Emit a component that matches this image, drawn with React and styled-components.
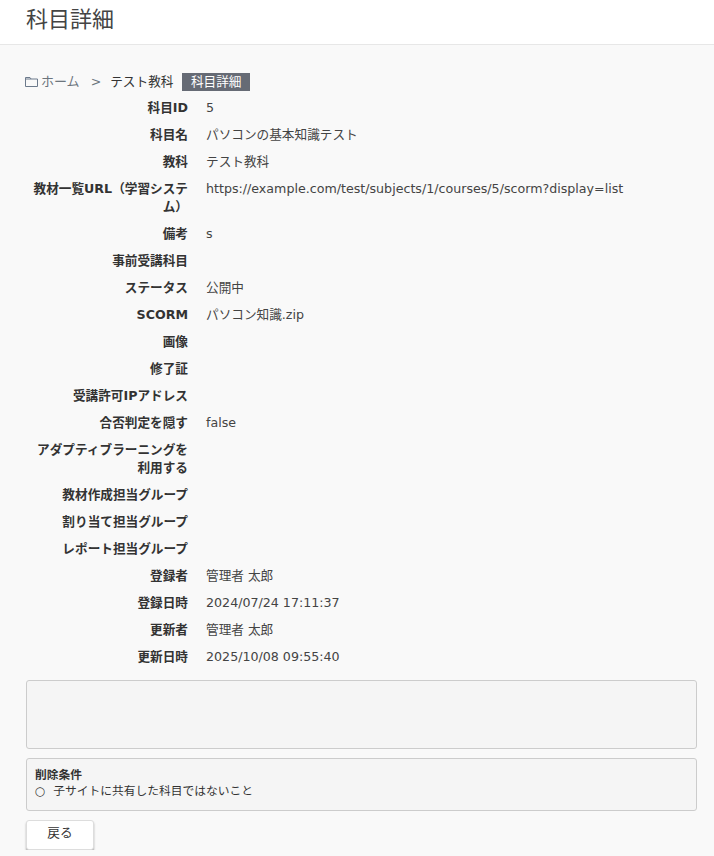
import { createGlobalStyle } from "styled-components";
import styled from "styled-components";

const GlobalStyle = createGlobalStyle`
  html, body {
    margin: 0;
    padding: 0;
    background: #f9f9f9;
    color: #333;
    font-family: "DejaVu Sans", "Noto Sans CJK JP", sans-serif;
    font-size: 12.65px;
    line-height: 18px;
  }
`;

const Header = styled.header`
  height: 44px;
  background: #fff;
  border-bottom: 1px solid #e7e7e7;
  padding-left: 26px;
`;

const Title = styled.h1`
  margin: 0;
  font-size: 22px;
  font-weight: 400;
  line-height: 40px;
  color: #444;
`;

const Content = styled.main`
  padding: 27px 17px 0 26px;
`;

const Breadcrumb = styled.nav`
  display: flex;
  align-items: center;
  height: 19px;
  margin-bottom: 8px;
`;

const Crumb = styled.span`
  color: ${({ $muted }) => ($muted ? "#6c757d" : "#333")};
`;

const HomeCrumb = styled(Crumb)`
  display: flex;
  align-items: center;
  gap: 3px;
  margin-left: -1px;
  font-size: 13px;
`;

const Separator = styled.span`
  color: #6c757d;
  margin: 0 9px 0 11px;
`;

const Badge = styled.span`
  margin-left: 9px;
  padding: 0 8.5px;
  height: 18px;
  line-height: 18px;
  background: #666b75;
  color: #fff;
`;

const Row = styled.div`
  display: grid;
  grid-template-columns: 162px 1fr;
  column-gap: 18px;
  padding-bottom: 9px;
`;

const Label = styled.div`
  text-align: right;
  font-weight: 700;
  padding-left: 6px;
`;

const Value = styled.div`
  color: #444;
`;

const Panels = styled.div`
  margin-top: 5px;
`;

const Panel = styled.div`
  background: #f5f5f5;
  border: 1px solid #ccc;
  border-radius: 3px;
  box-sizing: border-box;
  min-height: ${({ $height }) => $height}px;
  margin-bottom: 9px;
  padding: 8px 8px;
  line-height: 16px;
  font-size: 11.75px;
`;

const PanelTitle = styled.div`
  font-weight: 700;
`;

const Mark = styled.span`
  margin-right: 8px;
`;

const BackButton = styled.button`
  display: block;
  width: 68px;
  height: 30px;
  padding: 0 0 5px;
  background: #fff;
  border: 1px solid #ddd;
  border-radius: 3px;
  box-shadow: 0 2px 2px #aaa;
  font: inherit;
  color: #333;
`;

const FolderIcon = () => (
  <svg width="13" height="12" viewBox="0 0 13 12" fill="none" stroke="#6c7a8c">
    <path d="M0.5 10.5V1.5H5L6 3H12.5V10.5Z" />
    <path d="M0.5 3H6" />
  </svg>
);

const rows = [
  ["科目ID", "5"],
  ["科目名", "パソコンの基本知識テスト"],
  ["教科", "テスト教科"],
  ["教材一覧URL（学習システム）", "https://example.com/test/subjects/1/courses/5/scorm?display=list"],
  ["備考", "s"],
  ["事前受講科目", ""],
  ["ステータス", "公開中"],
  ["SCORM", "パソコン知識.zip"],
  ["画像", ""],
  ["修了証", ""],
  ["受講許可IPアドレス", ""],
  ["合否判定を隠す", "false"],
  ["アダプティブラーニングを利用する", ""],
  ["教材作成担当グループ", ""],
  ["割り当て担当グループ", ""],
  ["レポート担当グループ", ""],
  ["登録者", "管理者 太郎"],
  ["登録日時", "2024/07/24 17:11:37"],
  ["更新者", "管理者 太郎"],
  ["更新日時", "2025/10/08 09:55:40"],
];

export default function App() {
  return (
    <>
      <GlobalStyle />
      <Header>
        <Title>科目詳細</Title>
      </Header>
      <Content>
        <Breadcrumb>
          <HomeCrumb $muted>
            <FolderIcon />
            ホーム
          </HomeCrumb>
          <Separator>&gt;</Separator>
          <Crumb>テスト教科</Crumb>
          <Badge>科目詳細</Badge>
        </Breadcrumb>
        {rows.map(([label, value]) => (
          <Row key={label}>
            <Label>{label}</Label>
            <Value>{value}</Value>
          </Row>
        ))}
        <Panels>
          <Panel $height={69} />
          <Panel $height={53}>
            <PanelTitle>削除条件</PanelTitle>
            <div>
              <Mark>○</Mark>子サイトに共有した科目ではないこと
            </div>
          </Panel>
        </Panels>
        <BackButton>戻る</BackButton>
      </Content>
    </>
  );
}
